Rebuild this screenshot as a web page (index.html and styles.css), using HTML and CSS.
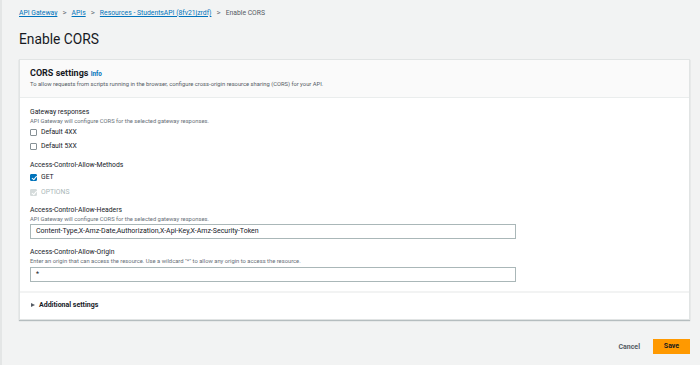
FILE: index.html
```html
<!DOCTYPE html>
<html lang="en">
<head>
    <meta charset="UTF-8">
    <title>Enable CORS</title>
    <link rel="stylesheet" href="styles.css">
</head>
<body>
    <div class="page">
        <nav class="breadcrumb">
            <a href="#">API Gateway</a>
            <span class="sep">&gt;</span>
            <a href="#">APIs</a>
            <span class="sep">&gt;</span>
            <a href="#">Resources - StudentsAPI (8fv21jzrdf)</a>
            <span class="sep">&gt;</span>
            <span class="current">Enable CORS</span>
        </nav>

        <h1>Enable CORS</h1>

        <div class="card">
            <div class="card-header">
                <h2>CORS settings <a href="#" class="info">Info</a></h2>
                <p>To allow requests from scripts running in the browser, configure cross-origin resource sharing (CORS) for your API.</p>
            </div>

            <div class="card-body">
                <div class="field">
                    <div class="label">Gateway responses</div>
                    <div class="hint">API Gateway will configure CORS for the selected gateway responses.</div>
                    <label class="check"><span class="box"></span>Default 4XX</label>
                    <label class="check"><span class="box"></span>Default 5XX</label>
                </div>

                <div class="field methods">
                    <div class="label">Access-Control-Allow-Methods</div>
                    <label class="check checked"><span class="box"></span>GET</label>
                    <label class="check disabled"><span class="box"></span>OPTIONS</label>
                </div>

                <div class="field">
                    <div class="label">Access-Control-Allow-Headers</div>
                    <div class="hint">API Gateway will configure CORS for the selected gateway responses.</div>
                    <div class="input">Content-Type,X-Amz-Date,Authorization,X-Api-Key,X-Amz-Security-Token</div>
                </div>

                <div class="field origin">
                    <div class="label">Access-Control-Allow-Origin</div>
                    <div class="hint">Enter an origin that can access the resource. Use a wildcard "*" to allow any origin to access the resource.</div>
                    <div class="input">*</div>
                </div>
            </div>

            <div class="card-footer">
                <span class="caret"></span>Additional settings
            </div>
        </div>

        <div class="actions">
            <a href="#" class="btn-link">Cancel</a>
            <a href="#" class="btn-primary">Save</a>
        </div>
    </div>
</body>
</html>
```

FILE: styles.css
```css
* {
    margin: 0;
    padding: 0;
    box-sizing: border-box;
}

body {
    font-family: Roboto, "Liberation Sans", sans-serif;
    background: #f2f3f3;
    color: #16191f;
    border-left: 2px solid #e4e6e6;
    min-height: 365px;
}

.page {
    padding: 7px 10px 0 17px;
}

/* Breadcrumb */
.breadcrumb {
    font-size: 6.8px;
    line-height: 12px;
    display: flex;
    align-items: center;
    gap: 5px;
    white-space: nowrap;
}

.breadcrumb a {
    color: #0073bb;
    text-decoration: underline;
}

.breadcrumb .sep {
    color: #687078;
    font-size: 8px;
}

.breadcrumb .current {
    color: #545b64;
}

h1 {
    font-size: 13.8px;
    font-weight: 400;
    line-height: 20px;
    margin: 10px 0 10px;
}

/* Card */
.card {
    background: #fff;
    border: 1px solid #e1e4e4;
    box-shadow: 0 1px 1px rgba(0, 28, 36, 0.25);
}

.card-header {
    background: #fafafa;
    border-bottom: 1px solid #eaeded;
    padding: 7px 10px 9px;
}

.card-header h2 {
    font-size: 9px;
    font-weight: 700;
    line-height: 12px;
}

.info {
    color: #0073bb;
    font-size: 6.3px;
    font-weight: 700;
    text-decoration: none;
}

.card-header p {
    font-size: 5.8px;
    line-height: 8px;
    color: #545b64;
}

.card-body {
    padding: 9px 10px 9px;
    border-bottom: 2px solid #f2f3f3;
}

.field + .field {
    margin-top: 6px;
}

.field.methods {
    margin-top: 7px;
}

.field.origin {
    margin-top: 8px;
}

.label {
    font-size: 6.8px;
    line-height: 10px;
}

.hint {
    font-size: 5.8px;
    line-height: 8px;
    color: #687078;
}

.check {
    display: flex;
    align-items: center;
    height: 14px;
    font-size: 6.8px;
}

.methods .check.disabled {
    margin-top: 1px;
}

.box {
    width: 7px;
    height: 7px;
    border: 1px solid #879196;
    border-radius: 1px;
    margin-right: 4px;
    position: relative;
    background: #fff;
}

.checked .box {
    background: #0073bb;
    border-color: #0073bb;
}

.disabled {
    color: #aab7b8;
}

.disabled .box {
    background: #d5dbdb;
    border-color: #d5dbdb;
}

.checked .box::after,
.disabled .box::after {
    content: '';
    position: absolute;
    left: 1.5px;
    top: 0px;
    width: 2px;
    height: 3.5px;
    border: solid #fff;
    border-width: 0 1px 1px 0;
    transform: rotate(40deg);
}

.input {
    width: 486px;
    height: 15px;
    border: 1px solid #aab7b8;
    font-size: 7px;
    line-height: 13px;
    padding: 0 5px;
    margin-top: 1px;
    white-space: nowrap;
}

.origin .input {
    margin-top: 2px;
}

.card-footer {
    padding: 6px 10px 8px;
    font-size: 7px;
    font-weight: 700;
    line-height: 12px;
    color: #16191f;
    display: flex;
    align-items: center;
}

.caret {
    width: 0;
    height: 0;
    border-top: 2.5px solid transparent;
    border-bottom: 2.5px solid transparent;
    border-left: 4px solid #545b64;
    margin: 0 4px 0 1px;
}

/* Actions */
.actions {
    display: flex;
    justify-content: flex-end;
    align-items: center;
    gap: 13px;
    margin-top: 19px;
}

.btn-link {
    color: #545b64;
    font-size: 7px;
    font-weight: 700;
    text-decoration: none;
}

.btn-primary {
    background: #ff9900;
    color: #16191f;
    font-size: 7px;
    font-weight: 700;
    text-decoration: none;
    width: 37px;
    height: 15px;
    line-height: 15px;
    text-align: center;
}
```
